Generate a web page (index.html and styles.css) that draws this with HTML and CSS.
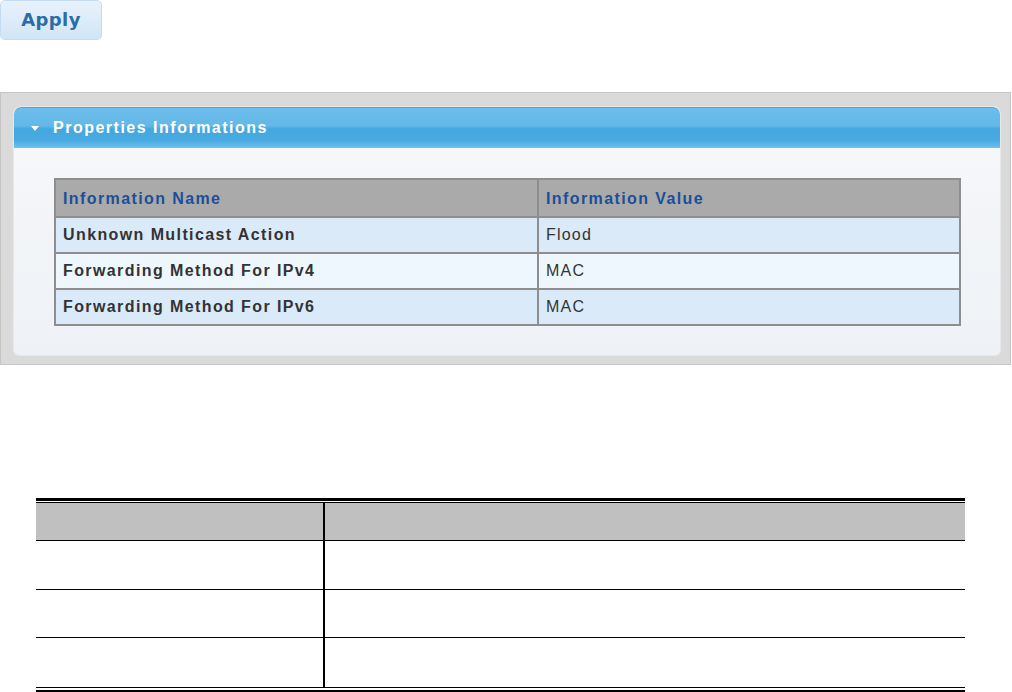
FILE: index.html
```html
<!DOCTYPE html>
<html>
<head>
<meta charset="utf-8">
<link rel="stylesheet" href="styles.css">
</head>
<body>
<div class="toolbar">
  <button class="btn-apply">Apply</button>
</div>

<section class="panel-wrap">
  <div class="panel">
    <div class="panel-head">
      <span class="caret"></span>
      <span class="panel-title">Properties Informations</span>
    </div>
    <div class="panel-body">
      <table class="info">
        <thead>
          <tr><th class="c-name">Information Name</th><th>Information Value</th></tr>
        </thead>
        <tbody>
          <tr class="odd"><td class="c-name">Unknown Multicast Action</td><td class="val">Flood</td></tr>
          <tr class="even"><td class="c-name">Forwarding Method For IPv4</td><td class="val">MAC</td></tr>
          <tr class="odd"><td class="c-name">Forwarding Method For IPv6</td><td class="val">MAC</td></tr>
        </tbody>
      </table>
    </div>
  </div>
</section>

<div class="doc">
  <table class="doc-table">
    <thead>
      <tr class="doc-head"><th class="d-first"></th><th></th></tr>
    </thead>
    <tbody>
      <tr class="r1"><td class="d-first"></td><td></td></tr>
      <tr class="r2"><td class="d-first"></td><td></td></tr>
      <tr class="r3"><td class="d-first"></td><td></td></tr>
    </tbody>
  </table>
</div>
</body>
</html>
```

FILE: styles.css
```css
html, body {
  margin: 0;
  padding: 0;
  background: #ffffff;
}

body {
  font-family: "Liberation Sans", Arial, sans-serif;
}

.toolbar {
  height: 40px;
}

.btn-apply {
  display: block;
  width: 102px;
  height: 40px;
  margin: 0;
  padding: 0 0 1px 0;
  border: 1px solid #c5dcf0;
  border-radius: 5px;
  background: linear-gradient(#e8f2fc 0%, #dcebf9 55%, #d2e5f6 100%);
  color: #2c6ca6;
  font-family: "DejaVu Sans", Verdana, sans-serif;
  font-weight: bold;
  font-size: 18px;
  letter-spacing: 0.4px;
  text-align: center;
}

.panel-wrap {
  margin-top: 52px;
  width: 1011px;
  box-sizing: border-box;
  padding: 14px 10px 9px 13px;
  background: #dadada;
  border: 1px solid #c6c6c6;
}

.panel {
  border-radius: 7px 7px 5px 5px;
  overflow: hidden;
  background: linear-gradient(#f8f9fb 0%, #f3f5f8 40%, #eef2f6 100%);
  box-shadow: 0 0 0 1px #e8e8e8;
}

.panel-head {
  height: 41px;
  box-sizing: border-box;
  display: flex;
  align-items: center;
  padding-left: 17px;
  padding-bottom: 1px;
  background: linear-gradient(#6cbdea 0%, #63b8e8 45%, #44a8e0 52%, #47aae1 80%, #6fc1ec 100%);
  border-top: 1px solid #4aa6e0;
  border-radius: 7px 7px 0 0;
}

.caret {
  width: 0;
  height: 0;
  border-left: 4px solid transparent;
  border-right: 4px solid transparent;
  border-top: 5px solid #ffffff;
  margin-right: 14px;
  margin-top: 1px;
}

.panel-title {
  color: #ffffff;
  font-weight: bold;
  font-size: 16px;
  letter-spacing: 1.5px;
}

.panel-body {
  padding: 30px 39px 29px 40px;
}

.info {
  width: 100%;
  border-collapse: collapse;
  border: 2px solid #8a8a8a;
  font-size: 16px;
  letter-spacing: 1.4px;
}

.info th, .info td {
  border: 2px solid #8e8e8e;
  height: 34px;
  padding: 0 0 0 7px;
  text-align: left;
}

.info th {
  background: #aaaaaa;
  color: #1a4f9a;
  font-weight: bold;
  height: 34px;
  padding-top: 2px;
}

.info .c-name {
  width: 474px;
}

.info td.c-name {
  color: #333333;
  font-weight: bold;
}

.info td.val {
  color: #333333;
  font-weight: normal;
  letter-spacing: 1.2px;
}

.info tr.odd td {
  background: #dbeaf8;
}

.info tr.even td {
  background: #eff7fe;
}

.doc {
  margin: 133px 0 0 36px;
  width: 929px;
  border-top: 3px solid #000000;
  border-bottom: 3px solid #000000;
  padding: 1px 0 2px 0;
}

.doc-table {
  width: 100%;
  border-collapse: collapse;
  border-top: 1px solid #000000;
  border-bottom: 1px solid #000000;
}

.doc-table th, .doc-table td {
  padding: 0;
  border-bottom: 1px solid #000000;
}

.doc-table tr.r3 td {
  border-bottom: 0;
}

.doc-table .d-first {
  width: 287px;
  border-right: 2px solid #000000;
}

.doc-head th {
  background: #c0c0c0;
  height: 37px;
}

.doc-table tr.r1 td { height: 48px; }
.doc-table tr.r2 td { height: 47px; }
.doc-table tr.r3 td { height: 49px; }
```
